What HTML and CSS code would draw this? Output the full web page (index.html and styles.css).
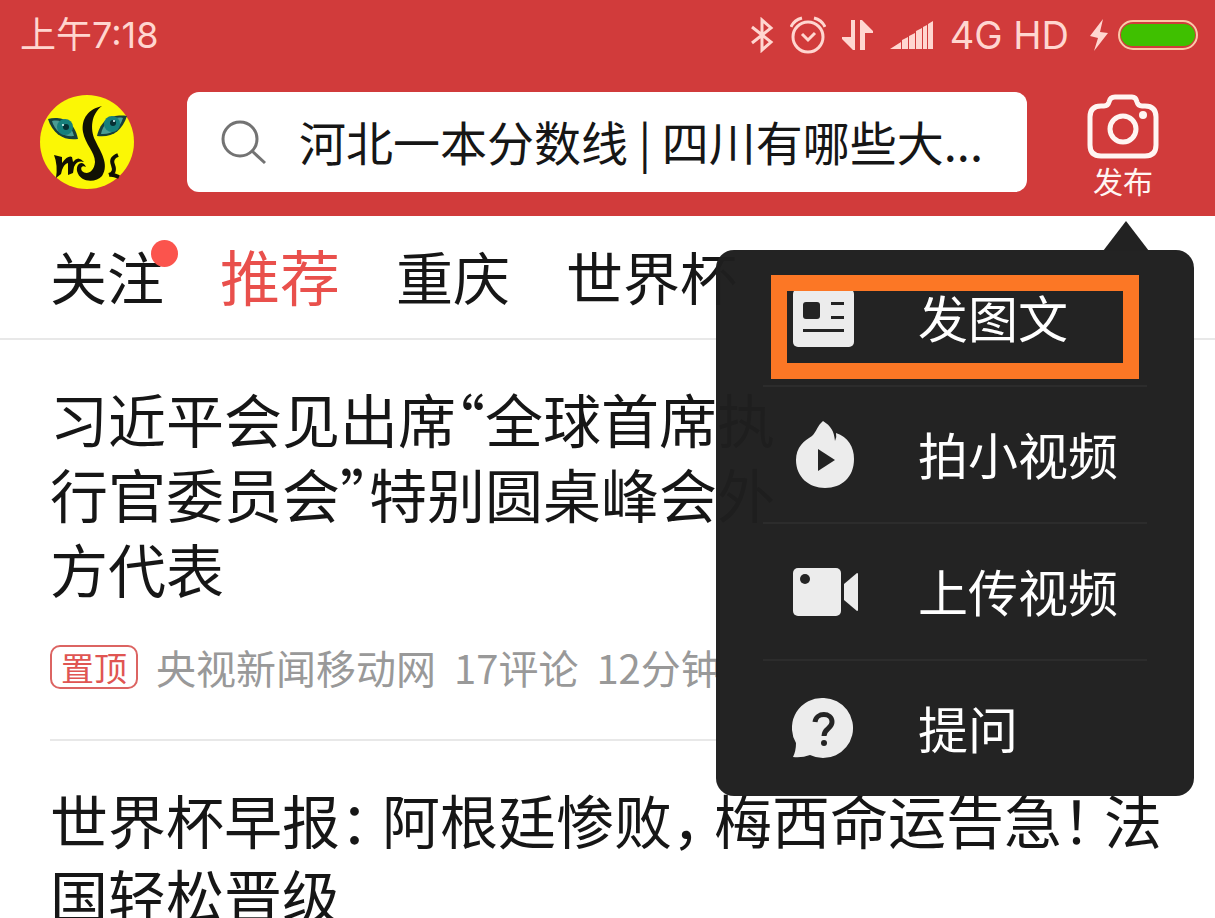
FILE: index.html
```
<!DOCTYPE html>
<html lang="zh-CN">
<head>
    <meta charset="UTF-8">
    <meta name="viewport" content="width=device-width, initial-scale=1.0">
    <title>推荐</title>
    <link rel="stylesheet" href="styles.css">
</head>
<body>
    <header class="header">
        <div class="status-bar">
            <span class="time">上午7:18</span>
            <div class="status-icons">
                <svg class="bluetooth" width="24" height="36" viewBox="0 0 24 36" fill="none" stroke="currentColor" stroke-width="3">
                    <path d="M2 10 L21 25 L12 33 V3 L21 11 L2 26"/>
                </svg>
                <svg class="alarm" width="36" height="38" viewBox="0 0 36 38" fill="none" stroke="currentColor" stroke-width="3">
                    <circle cx="18" cy="21" r="15"/>
                    <path d="M12 18 L18 24 L25 17 M1 11 Q4 4 12 2 M24 2 Q32 4 35 11"/>
                </svg>
                <svg class="data" width="32" height="32" viewBox="0 0 32 32" fill="currentColor">
                    <path d="M9 1 H13 V31 H11 L0 20 V18 H9 Z M18 1 H20 L31 12 V14 H23 V31 H18 Z"/>
                </svg>
                <svg class="signal" width="44" height="30" viewBox="0 0 44 30" fill="currentColor">
                    <path d="M0 29 L11 22 V29 Z M12 20 L18 17 V29 H12 Z M19 16 L25 13 V29 H19 Z M26 11 L32 8 V29 H26 Z M33 7 L37 5 V29 H33 Z M38 4 L43 1 V29 H38 Z"/>
                </svg>
                <span>4G HD</span>
                <div class="power">
                    <svg width="20" height="34" viewBox="0 0 20 34" fill="currentColor">
                        <path d="M14 1 L1 18 L9 20 L5 33 L19 15 L11 14 Z"/>
                    </svg>
                    <svg width="82" height="32" viewBox="0 0 82 32">
                        <rect x="2" y="2" width="78" height="28" rx="14" fill="none" stroke="#fbc8a8" stroke-width="2"/>
                        <rect x="4" y="5" width="74" height="22" rx="11" fill="#3fc000"/>
                    </svg>
                </div>
            </div>
        </div>

        <div class="top-bar">
            <svg class="avatar" width="95" height="95" viewBox="0 0 95 95" role="img" aria-label="头像">
                <circle cx="47" cy="47" r="47" fill="#fbf705"/>
                <path d="M8 24 C19 21 34 24 38 44 C25 46 13 40 8 24 Z" fill="#173f3c"/>
                <path d="M87 21 C74 19 61 23 57 41 C72 43 82 36 87 21 Z" fill="#173f3c"/>
                <path d="M12 26 C20 24 31 28 34 41 C24 42 15 37 12 26 Z" fill="#4b9c93"/>
                <path d="M83 23 C74 21 63 27 61 39 C71 40 80 34 83 23 Z" fill="#4b9c93"/>
                <circle cx="25" cy="32" r="8" fill="#177f7c"/>
                <circle cx="72" cy="29" r="8" fill="#177f7c"/>
                <circle cx="26" cy="32" r="3" fill="#072f33"/>
                <circle cx="73" cy="28" r="3" fill="#072f33"/>
                <circle cx="23" cy="30" r="1" fill="#e4ffff"/>
                <circle cx="74" cy="26" r="1" fill="#e4ffff"/>
                <path d="M62 11 C49 14 41 23 43 37 C45 49 55 57 55 67 C54 78 46 80 42 76 C40 73 42 70 46 72 C43 65 36 68 37 76 C40 88 56 88 62 81 C70 69 60 56 55 45 C50 34 51 19 62 11 Z" fill="#111104"/>
                <path d="M14 60 L22 62 L22 68 Q28 60 32 62 L33 67 Q38 60 44 67 Q37 65 34 72 L33 78 L28 80 V68 Q24 69 22 75 L21 79 L16 83 Q18 70 14 60 Z" fill="#111104"/>
                <path d="M78 60 Q70 63 73 70 Q76 78 69 80 Q72 79 79 82" fill="none" stroke="#111104" stroke-width="4"/>
            </svg>
            <label class="search">
                <svg width="46" height="46" viewBox="0 0 46 46" fill="none" stroke="#737373" stroke-width="3">
                    <circle cx="19" cy="20" r="17"/>
                    <path d="M31 32 L44 44"/>
                </svg>
                <input type="text" aria-label="搜索" value="河北一本分数线 | 四川有哪些大...">
            </label>
            <button class="publish">
                <svg width="72" height="66" viewBox="0 0 72 66" fill="none" stroke="#fff5f2" stroke-width="5">
                    <path d="M14 12 H17 Q21 12 22 8 Q23 3 28 3 H45 Q49 3 50 8 Q51 12 55 12 H58 Q69 12 69 23 V51 Q69 62 58 62 H14 Q3 62 3 51 V23 Q3 12 14 12 Z"/>
                    <circle cx="36" cy="35" r="13"/>
                    <circle cx="56" cy="21" r="4" fill="#fff5f2" stroke="none"/>
                </svg>
                发布
            </button>
        </div>
    </header>

    <nav class="tabs">
        <a href="#" class="tab has-dot">关注</a>
        <a href="#" class="tab active">推荐</a>
        <a href="#" class="tab">重庆</a>
        <a href="#" class="tab">世界杯</a>
    </nav>

    <main class="feed">
        <article class="news with-thumb">
            <h2>习近平会见出席“全球首席执行官委员会”特别圆桌峰会外方代表</h2>
            <div class="meta">
                <span class="tag">置顶</span>
                <span>央视新闻移动网</span>
                <span>17评论</span>
                <span>12分钟</span>
            </div>
        </article>
        <article class="news">
            <h2>世界杯早报： 阿根廷惨败， 梅西命运告急！ 法国轻松晋级</h2>
        </article>
    </main>

    <!-- publish menu, opened from the camera button -->
    <div class="menu">
        <svg class="menu-arrow" width="46" height="30" viewBox="0 0 46 30"><path d="M23 0 L46 30 H0 Z" fill="#222222"/></svg>
        <button class="menu-item selected">
            <svg width="68" height="68" viewBox="0 0 68 68" fill="#242424">
                <rect x="1" y="5" width="61" height="58" rx="5" fill="#ececec"/>
                <rect x="11" y="18" width="17" height="17" rx="3"/>
                <path d="M39 18 H52 V21 H39 Z M39 32 H52 V35 H39 Z M11 45 H52 V48 H11 Z"/>
            </svg>
            <span>发图文</span>
        </button>
        <button class="menu-item">
            <svg width="68" height="68" viewBox="0 0 68 68" fill="#ececec">
                <path d="M31 0 C39 5 42 10 43 20 Q45 16 44 12 C56 16 62 26 62 38 C62 56 50 67 33 67 C17 67 4 56 4 39 C4 26 12 20 20 15 C25 10 25 5 31 0 Z"/>
                <path d="M26 28 L43 39 L26 50 Z" fill="#242424"/>
            </svg>
            <span>拍小视频</span>
        </button>
        <button class="menu-item">
            <svg width="68" height="68" viewBox="0 0 68 68" fill="#ececec">
                <rect x="1" y="10" width="48" height="48" rx="5"/>
                <path d="M52 26 L65 15 Q66 15 66 16 V52 Q66 53 65 53 L52 42 Z"/>
                <circle cx="13" cy="21" r="5" fill="#242424"/>
            </svg>
            <span>上传视频</span>
        </button>
        <button class="menu-item">
            <svg width="68" height="68" viewBox="0 0 68 68" fill="#ececec">
                <path d="M32 3 A30 30 0 1 1 18 60 Q10 63 1 62 Q4 56 4 48 A30 30 0 0 1 32 3 Z"/>
                <path d="M23 27 C24 17 40 17 40 27 C40 34 32 33 32 41" fill="none" stroke="#242424" stroke-width="5"/>
                <circle cx="32" cy="48" r="3" fill="#242424"/>
            </svg>
            <span>提问</span>
        </button>
    </div>
</body>
</html>
```

FILE: styles.css
```
* {
    box-sizing: border-box;
}
body {
    position: relative;
    height: 100vh;
    margin: 0;
    overflow: hidden;
    background: #fff;
    color: #161616;
    font-family: "Noto Sans CJK SC", sans-serif;
}
button {
    padding: 0;
    border: none;
    background: none;
    color: inherit;
    font-family: inherit;
    cursor: pointer;
}
svg {
    flex-shrink: 0;
}

/* Header */
.header {
    height: 216px;
    background: #d13b3b;
    color: #ffd6d0;
}
.status-bar {
    display: flex;
    justify-content: space-between;
    align-items: center;
    height: 70px;
    padding: 0 16px 0 20px;
    font-family: Inter, "Noto Sans CJK SC", sans-serif;
    font-size: 36px;
    line-height: 70px;
}
.status-icons {
    display: flex;
    align-items: center;
    gap: 16px;
}
.status-icons span {
    font-size: 38px;
}
.power {
    display: flex;
    align-items: center;
    gap: 8px;
    margin-left: 4px;
}
.top-bar {
    display: flex;
    align-items: flex-start;
    gap: 52px;
    padding: 22px 56px 0 40px;
}
.avatar {
    margin-top: 3px;
}
.search {
    display: flex;
    flex: 1;
    align-items: center;
    gap: 32px;
    height: 100px;
    padding: 0 34px;
    border-radius: 12px;
    background: #fff;
}
.search input {
    flex: 1;
    min-width: 0;
    padding: 0 0 4px;
    border: none;
    outline: none;
    background: none;
    color: #161616;
    font-family: inherit;
    font-size: 47px;
}
.publish {
    display: flex;
    flex-direction: column;
    align-items: center;
    margin: 2px 0 0 8px;
    color: #fff5f2;
    font-size: 30px;
    line-height: 40px;
}

/* Channel tabs */
.tabs {
    display: flex;
    gap: 56px;
    height: 124px;
    padding: 0 50px;
    border-bottom: 2px solid #e8e8e8;
    line-height: 118px;
}
.tab {
    position: relative;
    color: inherit;
    font-size: 57px;
    text-decoration: none;
    white-space: nowrap;
}
.tab.active {
    color: #e9504c;
    font-size: 60px;
}
.has-dot::after {
    content: "";
    position: absolute;
    top: 24px;
    right: -14px;
    width: 27px;
    height: 27px;
    border-radius: 50%;
    background: #fb544d;
}

/* News list */
.feed {
    padding: 0 50px;
}
.news {
    padding: 41px 0 50px;
    border-bottom: 2px solid #e8e8e8;
}
.news h2 {
    margin: 0;
    font-size: 58px;
    font-weight: normal;
    line-height: 75px;
    font-feature-settings: "halt";
}
.with-thumb h2 {
    max-width: 67%;
}
.meta {
    display: flex;
    align-items: center;
    gap: 18px;
    height: 44px;
    margin-top: 39px;
    color: #999;
    font-size: 40px;
    white-space: nowrap;
}
.tag {
    height: 44px;
    padding: 0 9px;
    border: 2px solid #dc6462;
    border-radius: 10px;
    color: #e05552;
    font-size: 33px;
    line-height: 40px;
}

/* Publish menu */
.menu {
    position: absolute;
    top: 250px;
    right: 21px;
    width: 478px;
    padding: 0 47px;
    border-radius: 18px;
    background: rgba(31, 31, 31, 0.98);
}
.menu-arrow {
    position: absolute;
    top: -29px;
    right: 45px;
}
.menu-item {
    position: relative;
    display: flex;
    align-items: center;
    gap: 58px;
    width: 100%;
    height: 137px;
    padding-left: 29px;
    border-bottom: 2px solid #2c2c2c;
    color: #fff;
    font-size: 50px;
}
.menu-item span {
    padding-bottom: 4px;
}
.menu-item:last-child {
    height: 135px;
    border-bottom: none;
}
.menu-item.selected::after {
    content: "";
    position: absolute;
    inset: 25px 8px 6px;
    border: 16px solid #fc7725;
}
```
